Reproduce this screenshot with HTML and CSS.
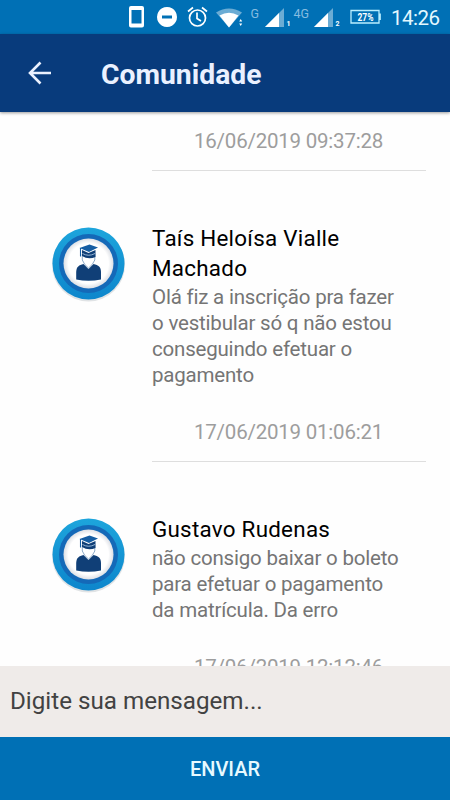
FILE: index.html
```html
<!DOCTYPE html>
<html lang="pt-BR">
<head>
<meta charset="utf-8">
<title>Comunidade</title>
<link rel="stylesheet" href="styles.css">
</head>
<body>
<svg width="0" height="0" class="defs" aria-hidden="true">
  <defs>
    <radialGradient id="disc"><stop offset=".8" stop-color="#fff"/><stop offset="1" stop-color="#dcdfe5"/></radialGradient>
    <linearGradient id="ring" x1="0" y1="0" x2="0" y2="1"><stop offset="0" stop-color="#1da5dc"/><stop offset="1" stop-color="#0d86cc"/></linearGradient>
    <symbol id="student" viewBox="0 0 76 78">
      <circle cx="38.500" cy="39" r="36.500" fill="#9aa5ad" opacity=".3"/>
      <circle cx="38.500" cy="37.500" r="36" fill="url(#ring)"/>
      <circle cx="38.500" cy="37.500" r="29.500" fill="#1469b8"/>
      <circle cx="38.500" cy="37.500" r="25" fill="url(#disc)"/>
      <path d="M26.200 53.500V46C26.500 40.500 29 39.200 33.500 38L38.500 43L43.500 38C48.500 39.200 51 41 51 46V53.500Q38.500 56 26.200 53.500Z" fill="#103f77"/>
      <path d="M32.300 28V34L34.800 38.500L38.500 42L42.200 38.500L44.800 34V28Z" fill="#fff" stroke="#5f86b0" stroke-width=".7"/>
      <path d="M32 24L38.500 27L45.500 24V31Q38.500 34 32 30Z" fill="#103f77"/>
      <path d="M32.500 27.500Q38.500 31 45 27.500" fill="none" stroke="#b5d2eb" stroke-width=".8"/>
      <path d="M29.500 22L39.500 18.500L48 21.500L39 26Z" fill="#155da3"/>
      <path d="M30.500 22V30.500" fill="none" stroke="#155da3" stroke-width="1.100"/>
    </symbol>
  </defs>
</svg>
<div class="screen">
  <header class="status">
    <svg class="status-icons" width="255" height="34" viewBox="128 0 255 34" fill="#fff">
      <path fill-rule="evenodd" d="M131 6h11q2 0 2 2v17.500q0 2-2 2h-11q-2 0-2-2v-17.500q0-2 2-2ZM131.500 10v13.500h10v-13.500Z"/>
      <path fill-rule="evenodd" d="M167 7a10 10 0 1 0 .01 0ZM162 15.500h10v3h-10Z"/>
      <g fill="none" stroke="#fff" stroke-width="1.700"><circle cx="197.500" cy="18" r="8"/><path d="M197 12.500v6l4 2.500M188 11.500l5-4M207 11.500l-5-4"/></g>
      <path d="M216 12.500Q229 4.500 242 12.500L229 27.500Z" opacity=".42"/>
      <path d="M219.500 15.500Q229 10 238.500 15.500L229 27.500Z"/>
      <path d="M239.200 21.500l1.500-2.500 1.500 2.500ZM239.200 23.500l1.500 2.500 1.500-2.500Z"/>
      <path d="M265 27L284 8V27Z" opacity=".42"/><path d="M265 27L279 13V27Z"/>
      <path d="M314 27L333 8V27Z" opacity=".42"/><path d="M314 27L328 13V27Z"/>
      <path d="M351 10.500h28v12.500h-28ZM380.200 13.500v6.500" fill="none" stroke="#b9eeff" stroke-width="1.300"/>
      <g font-family="Roboto, sans-serif"><text x="250.500" y="17.500" font-size="12.500" fill="#86bce0">G</text><text x="293.500" y="18" font-size="12.500" fill="#86bce0">4G</text>
      <text x="286.500" y="26" font-size="7" font-weight="700">1</text><text x="335.500" y="26" font-size="7" font-weight="700">2</text>
      <text x="357.500" y="20.800" font-size="10" textLength="16" lengthAdjust="spacingAndGlyphs" font-weight="700">27%</text></g>
    </svg>
    <span class="clock">14:26</span>
  </header>
  <div class="appbar">
    <svg class="back" width="24" height="24" viewBox="0 0 24 24" fill="none" stroke="#eaf1ff" stroke-width="2.600"><path d="M23 12H2M12.500 1.500L2 12L12.500 22.500"/></svg>
    <h1 class="title">Comunidade</h1>
  </div>
  <main class="messages">
    <article class="message previous"><div class="content">
      <time class="date">16/06/2019 09:37:28</time>
    </div></article>
    <article class="message">
      <svg class="avatar"><use href="#student"/></svg>
      <div class="content">
        <h2 class="name">Taís Heloísa Vialle<br>Machado</h2>
        <p class="text">Olá fiz a inscrição pra fazer<br>o vestibular só q não estou<br>conseguindo efetuar o<br>pagamento</p>
        <time class="date">17/06/2019 01:06:21</time>
      </div>
    </article>
    <article class="message">
      <svg class="avatar"><use href="#student"/></svg>
      <div class="content">
        <h2 class="name">Gustavo Rudenas</h2>
        <p class="text">não consigo baixar o boleto<br>para efetuar o pagamento<br>da matrícula. Da erro</p>
        <time class="date">17/06/2019 12:12:46</time>
      </div>
    </article>
  </main>
  <div class="composer">Digite sua mensagem...</div>
  <button class="send">ENVIAR</button>
</div>
</body>
</html>
```

FILE: styles.css
```css
* { box-sizing: border-box; }
body { margin: 0; font-family: Roboto, sans-serif; }
.defs { display: block; }
.screen { width: 450px; height: 800px; display: flex; flex-direction: column; overflow: hidden; background: #fefefe; }
.status { flex: none; height: 34px; background: #0070b5; display: flex; align-items: center; padding-left: 128px; }
.status-icons { flex: none; }
.clock { margin-left: 8px; padding-top: 2px; color: #e4f8ff; font-size: 20.5px; letter-spacing: -.5px; line-height: 24px; white-space: nowrap; }
.appbar { flex: none; height: 78px; display: flex; align-items: center; padding-left: 28px; background: #083b7c; box-shadow: 0 1px 3px rgba(0,0,0,.4); z-index: 1; }
.back { margin-right: 49px; }
.title { margin: 3px 0 0; color: #eaf1ff; font-size: 28.3px; line-height: 36px; font-weight: 700; white-space: nowrap; }
.messages { flex: none; height: 554px; overflow: hidden; }
.message { display: flex; padding: 36px 24px 16px 50px; }
.message.previous { height: 75px; padding: 16px 24px 16px 152px; }
.avatar { flex: none; width: 76px; height: 78px; margin: 3px 26px 0 0; }
.content { flex: 1; border-bottom: 1px solid #dedede; white-space: nowrap; }
.name { margin: 0; color: #000; font-size: 22.4px; letter-spacing: .26px; line-height: 30px; font-weight: 400; }
.text { margin: 0 0 31px; padding-top: 1px; color: #757575; font-size: 20.5px; letter-spacing: -.2px; line-height: 26px; }
.date { display: block; height: 42px; padding-left: 42px; color: #9d9d9d; font-size: 20.5px; letter-spacing: -.22px; line-height: 26px; }
.composer { flex: none; height: 71px; padding: 0 10px; background: #efebe9; color: #424242; font-size: 24.2px; line-height: 71px; }
.send { flex: none; height: 63px; padding: 1px 0 0; border: 0; background: #0070b5; color: #e8faff; font: 500 20px Roboto, sans-serif; }
```
